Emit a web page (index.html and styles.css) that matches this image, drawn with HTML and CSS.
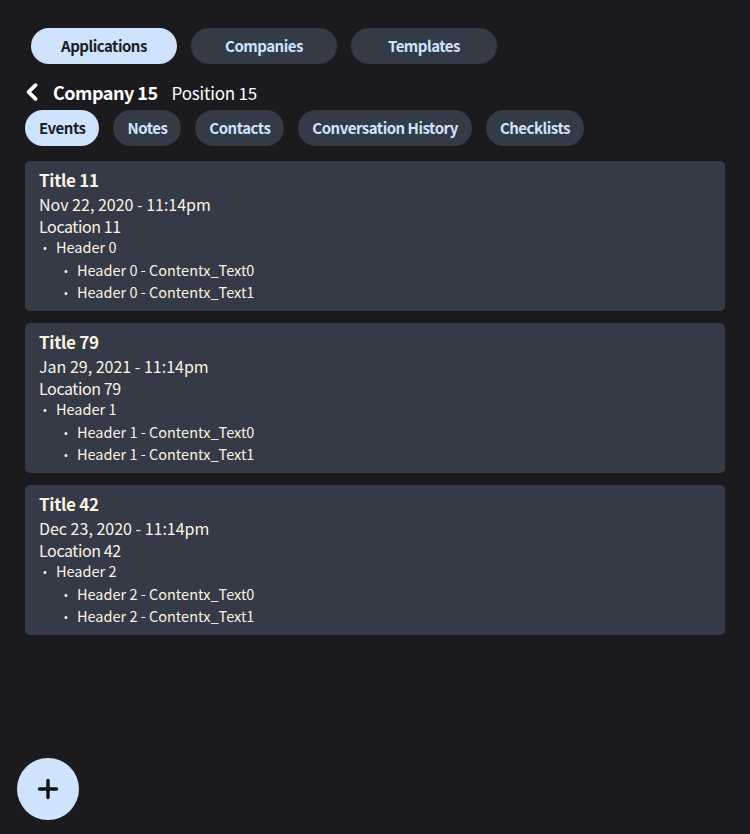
FILE: index.html
```html
<!DOCTYPE html>
<html>
<head>
<meta charset="utf-8">
<link rel="stylesheet" href="styles.css">
</head>
<body>
<div class="app">
  <nav class="top-tabs">
    <button class="pill pill-lg active">Applications</button>
    <button class="pill pill-lg">Companies</button>
    <button class="pill pill-lg">Templates</button>
  </nav>
  <div class="crumb">
    <svg class="back" width="14" height="18" viewBox="0 0 14 18"><path d="M10.5 2.2 L3.6 9 L10.5 15.8" fill="none" stroke="#fff" stroke-width="3.8" stroke-linecap="round" stroke-linejoin="round"/></svg>
    <span class="company">Company 15</span>
    <span class="position">Position 15</span>
  </div>
  <nav class="sub-tabs">
    <button class="pill active">Events</button>
    <button class="pill">Notes</button>
    <button class="pill">Contacts</button>
    <button class="pill">Conversation History</button>
    <button class="pill">Checklists</button>
  </nav>
  <div class="cards">
    <div class="card">
      <div class="title">Title 11</div>
      <div class="date">Nov 22, 2020 - 11:14pm</div>
      <div class="loc">Location 11</div>
      <ul class="list">
        <li>Header 0
          <ul class="list sub">
            <li>Header 0 - Contentx_Text0</li>
            <li>Header 0 - Contentx_Text1</li>
          </ul>
        </li>
      </ul>
    </div>
    <div class="card">
      <div class="title">Title 79</div>
      <div class="date">Jan 29, 2021 - 11:14pm</div>
      <div class="loc">Location 79</div>
      <ul class="list">
        <li>Header 1
          <ul class="list sub">
            <li>Header 1 - Contentx_Text0</li>
            <li>Header 1 - Contentx_Text1</li>
          </ul>
        </li>
      </ul>
    </div>
    <div class="card">
      <div class="title">Title 42</div>
      <div class="date">Dec 23, 2020 - 11:14pm</div>
      <div class="loc">Location 42</div>
      <ul class="list">
        <li>Header 2
          <ul class="list sub">
            <li>Header 2 - Contentx_Text0</li>
            <li>Header 2 - Contentx_Text1</li>
          </ul>
        </li>
      </ul>
    </div>
  </div>
  <button class="fab"><svg width="24" height="24" viewBox="0 0 24 24"><path d="M12 3.5 V20.5 M3.5 12 H20.5" stroke="#111418" stroke-width="3.4" stroke-linecap="round"/></svg></button>
</div>
</body>
</html>
```
FILE: styles.css
```css
*, *::before, *::after { box-sizing: border-box; }
html, body { margin: 0; padding: 0; }
body {
  background: #1b1b1f;
  width: 750px;
  height: 834px;
  overflow: hidden;
  font-family: "Noto Sans CJK KR", "Inter", sans-serif;
}
.app {
  position: relative;
  height: 834px;
  padding: 28px 25px 0 25px;
}
.top-tabs {
  display: flex;
  gap: 14px;
  padding-left: 6px;
}
.pill {
  border: none;
  font-family: inherit;
  background: #343a46;
  color: #cfe3fd;
  font-weight: 700;
  font-size: 15px;
  letter-spacing: -0.5px;
  height: 36px;
  border-radius: 18px;
  padding: 0 14px;
  line-height: 36px;
  cursor: pointer;
}
.pill-lg { width: 146px; padding: 0; }
.pill.active { background: #cfe3fd; color: #1b1d24; }
.crumb {
  display: flex;
  align-items: center;
  height: 30px;
  margin-top: 13px;
  color: #fff;
}
.back { margin-right: 14px; margin-left: 0; }
.company { font-weight: 700; font-size: 18px; letter-spacing: -0.5px; margin-right: 14px; }
.position { font-size: 17px; font-weight: 400; letter-spacing: -0.2px; }
.sub-tabs {
  display: flex;
  gap: 14px;
  margin-top: 3px;
}
.cards {
  margin-top: 15px;
  display: flex;
  flex-direction: column;
  gap: 12px;
}
.card {
  background: #343a46;
  border-radius: 5px;
  height: 150px;
  padding: 8px 14px;
  color: #fcf3e6;
}
.title { font-weight: 700; font-size: 17px; line-height: 22px; letter-spacing: -0.3px; }
.date { font-size: 16px; line-height: 24px; margin-top: 1px; }
.loc { font-size: 16px; line-height: 20px; letter-spacing: -0.4px; }
.list {
  list-style: none;
  margin: 0;
  padding: 0;
  font-size: 14.5px;
  line-height: 22.5px;
}
.list li::before {
  content: "•";
  display: inline-block;
  width: 17px;
  padding-left: 4px;
  font-size: 11px;
  line-height: 1;
  vertical-align: 1px;
}
.list.sub { padding-left: 21px; }
.fab {
  position: absolute;
  left: 17px;
  top: 758px;
  width: 62px;
  height: 62px;
  border-radius: 50%;
  background: #cfe3fd;
  border: none;
  display: flex;
  align-items: center;
  justify-content: center;
  padding: 0;
}
```
